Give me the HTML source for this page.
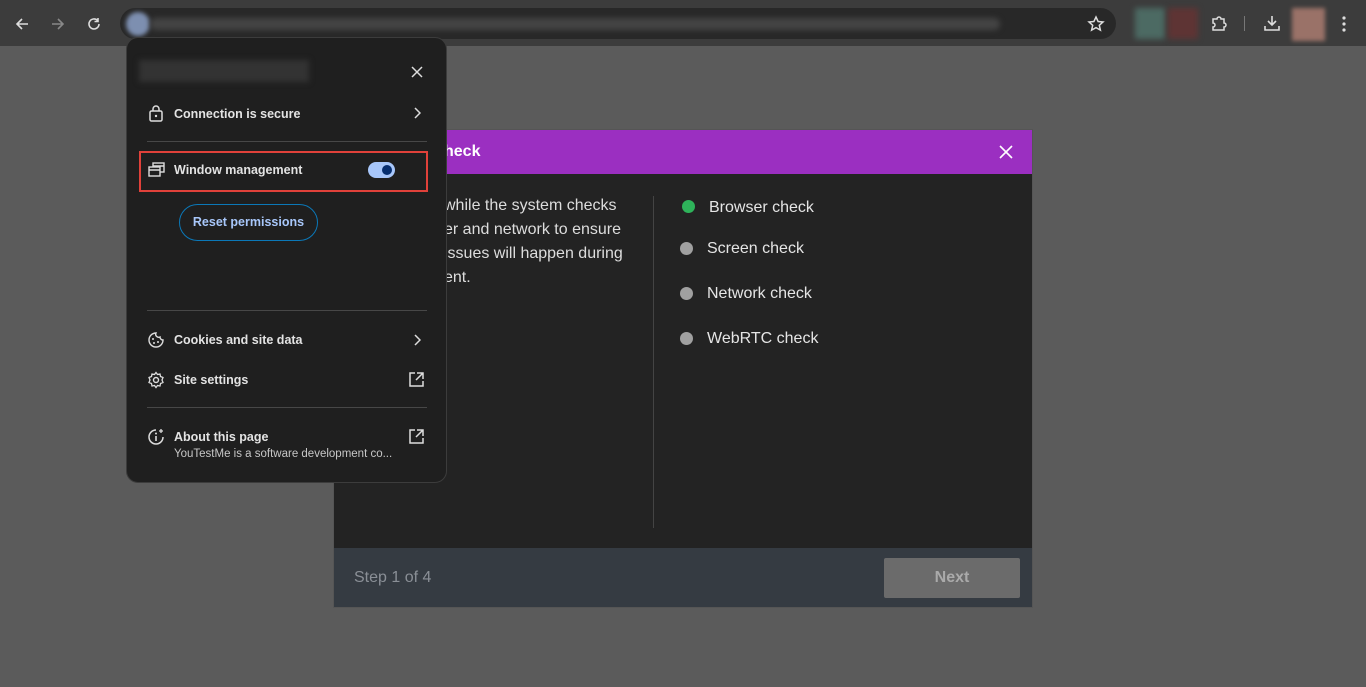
<!DOCTYPE html>
<html><head><meta charset="utf-8"><style>
*{margin:0;padding:0;box-sizing:border-box}
body{width:1366px;height:687px;overflow:hidden;font-family:"Liberation Sans",sans-serif;background:#5b5b5b;position:relative}
.bg{position:absolute;left:0;top:46px;width:1366px;height:641px;background-color:#5b5b5b}
.tb{position:absolute;left:0;top:0;width:1366px;height:46px;background:#3c3c3c}
.addr{position:absolute;left:120px;top:8px;width:996px;height:31px;border-radius:16px;background:#282828}
.blur{position:absolute;height:12px;top:17px;background:#444;filter:blur(3px);border-radius:6px}
.pop{position:absolute;left:126px;top:37px;width:321px;height:446px;background:#1f1f1f;border:1px solid #3c3c3c;border-radius:12px;color:#e3e3e3;font-size:12.5px;font-weight:bold}
.pop .row{position:absolute;left:47px}
.sep{position:absolute;left:20px;width:280px;height:1px;background:#474747}
.modal{position:absolute;left:333px;top:129px;width:700px;height:479px;background:#232323;border:1px solid #555}
.mh{height:44px;background:#9b2fc1;color:#fff;font-weight:bold;font-size:16px;padding:13px 0 0 110px}
.ft{position:absolute;left:0;bottom:0;width:698px;height:59px;background:#353b42}
.txt{position:absolute;color:#ddd;font-size:16px;line-height:24px}
.dot{position:absolute;width:13px;height:13px;border-radius:50%;background:#a0a0a0}
.chk{position:absolute;color:#e5e5e5;font-size:16px}
svg{position:absolute}
</style></head><body>
<div class="bg"></div>
<div class="tb">
<svg width="16" height="16" style="left:14px;top:16px" viewBox="0 0 16 16"><path d="M14 8H3M8 3L3 8l5 5" stroke="#ddd" stroke-width="1.6" fill="none"/></svg>
<svg width="16" height="16" style="left:50px;top:16px" viewBox="0 0 16 16"><path d="M2 8h11M8 3l5 5-5 5" stroke="#888" stroke-width="1.6" fill="none"/></svg>
<svg width="16" height="16" style="left:86px;top:16px" viewBox="0 0 16 16"><path d="M13 8a5 5 0 1 1-1.5-3.6M12 2v3.5H8.5" stroke="#ddd" stroke-width="1.6" fill="none"/></svg>
<div class="addr">
<div style="position:absolute;left:6px;top:4px;width:24px;height:24px;border-radius:50%;background:#7d8fb0;filter:blur(2px)"></div>
<div class="blur" style="left:30px;width:850px;top:10px"></div>
<svg width="18" height="18" style="left:967px;top:7px" viewBox="0 0 18 18"><path d="M9 2l2.1 4.5 4.9.5-3.7 3.3 1.1 4.8L9 12.6 4.6 15.1l1.1-4.8L2 7l4.9-.5z" stroke="#ddd" stroke-width="1.5" fill="none"/></svg>
</div>
<div style="position:absolute;left:1135px;top:8px;width:30px;height:31px;background:#4c6a63;filter:blur(3px)"></div>
<div style="position:absolute;left:1168px;top:8px;width:30px;height:31px;background:#5e3434;filter:blur(3px)"></div>
<svg width="18" height="18" style="left:1210px;top:15px" viewBox="0 0 18 18"><path d="M3 4h4a2 2 0 0 1 4 0h3v4a2 2 0 0 1 0 4v3H3v-3a2 2 0 0 0 0-4z" stroke="#ddd" stroke-width="1.5" fill="none"/></svg>
<div style="position:absolute;left:1244px;top:16px;width:1px;height:15px;background:#777"></div>
<svg width="18" height="18" style="left:1263px;top:14px" viewBox="0 0 18 18"><path d="M9 2v9M5 7l4 4 4-4M2 12v4h14v-4" stroke="#ddd" stroke-width="1.6" fill="none"/></svg>
<div style="position:absolute;left:1292px;top:8px;width:33px;height:33px;background:#9a7268;filter:blur(2px)"></div>
<svg width="6" height="18" style="left:1341px;top:15px" viewBox="0 0 6 18"><circle cx="3" cy="3" r="1.6" fill="#ddd"/><circle cx="3" cy="9" r="1.6" fill="#ddd"/><circle cx="3" cy="15" r="1.6" fill="#ddd"/></svg>
</div>

<div class="modal">
<div class="mh">heck</div>
<svg width="16" height="16" style="left:664px;top:14px" viewBox="0 0 16 16"><path d="M2 2l12 12M14 2L2 14" stroke="#fff" stroke-width="1.6"/></svg>
<div class="txt" style="left:110px;top:64px">while the system checks<br>er and network to ensure<br>issues will happen during<br>ent.</div>
<div style="position:absolute;left:319px;top:66px;width:1px;height:332px;background:#444"></div>
<div class="dot" style="left:348px;top:70px;background:#2eb35a"></div><div class="chk" style="left:375px;top:69px">Browser check</div>
<div class="dot" style="left:346px;top:112px"></div><div class="chk" style="left:373px;top:110px">Screen check</div>
<div class="dot" style="left:346px;top:157px"></div><div class="chk" style="left:373px;top:155px">Network check</div>
<div class="dot" style="left:346px;top:202px"></div><div class="chk" style="left:373px;top:200px">WebRTC check</div>
<div class="ft">
<div style="position:absolute;left:20px;top:21px;color:#8a8f96;font-size:16px">Step 1 of 4</div>
<div style="position:absolute;left:550px;top:10px;width:136px;height:40px;background:#6b6b6b;color:#aaa;font-weight:bold;font-size:16px;text-align:center;line-height:40px;border-radius:2px">Next</div>
</div>
</div>

<div class="pop">
<div style="position:absolute;left:12px;top:22px;width:170px;height:22px;background:#333;filter:blur(3px)"></div>
<svg width="12" height="12" style="left:284px;top:28px" viewBox="0 0 12 12"><path d="M1 1l10 10M11 1L1 11" stroke="#ddd" stroke-width="1.5"/></svg>
<svg width="16" height="18" style="left:21px;top:66px" viewBox="0 0 16 18"><rect x="2" y="7" width="12" height="10" rx="1.5" stroke="#ddd" stroke-width="1.5" fill="none"/><path d="M5 7V5a3 3 0 0 1 6 0v2" stroke="#ddd" stroke-width="1.5" fill="none"/><circle cx="8" cy="12" r="1.2" fill="#ddd"/></svg>
<div class="row" style="top:69px">Connection is secure</div>
<svg width="8" height="12" style="left:286px;top:69px" viewBox="0 0 8 12"><path d="M2 1l5 5-5 5" stroke="#ddd" stroke-width="1.5" fill="none"/></svg>
<div class="sep" style="top:103px"></div>
<div style="position:absolute;left:12px;top:113px;width:289px;height:41px;border:2px solid #e0413a"></div>
<svg width="18" height="16" style="left:21px;top:124px" viewBox="0 0 18 16"><rect x="5" y="1" width="11" height="9" stroke="#ddd" stroke-width="1.4" fill="none"/><rect x="1" y="5" width="11" height="9" fill="#1f1f1f" stroke="#ddd" stroke-width="1.4"/><path d="M1 8h11M5 4h11" stroke="#ddd" stroke-width="1.4"/></svg>
<div class="row" style="top:125px">Window management</div>
<div style="position:absolute;left:241px;top:124px;width:27px;height:16px;border-radius:8px;background:#a8c7fa"><div style="position:absolute;right:3px;top:3px;width:10px;height:10px;border-radius:50%;background:#062e6f"></div></div>
<div style="position:absolute;left:52px;top:166px;width:139px;height:37px;border:1px solid #0b78b8;border-radius:19px;color:#a8c7fa;text-align:center;line-height:35px">Reset permissions</div>
<div class="sep" style="top:272px"></div>
<svg width="18" height="18" style="left:20px;top:293px" viewBox="0 0 18 18"><path d="M9 2a7 7 0 1 0 7 7 3 3 0 0 1-3-3 3 3 0 0 1-4-4z" stroke="#ddd" stroke-width="1.4" fill="none"/><circle cx="6" cy="8" r="1" fill="#ddd"/><circle cx="7" cy="12" r="1" fill="#ddd"/><circle cx="11" cy="11" r="1" fill="#ddd"/></svg>
<div class="row" style="top:295px">Cookies and site data</div>
<svg width="8" height="12" style="left:286px;top:296px" viewBox="0 0 8 12"><path d="M2 1l5 5-5 5" stroke="#ddd" stroke-width="1.5" fill="none"/></svg>
<svg width="18" height="18" style="left:20px;top:333px" viewBox="0 0 18 18"><circle cx="9" cy="9" r="2.5" stroke="#ddd" stroke-width="1.4" fill="none"/><path d="M9 1.5l1.5 2 2.5-.5.5 2.5 2.5 1-1 2.5 1 2.5-2.5 1-.5 2.5-2.5-.5L9 16.5l-1.5-2-2.5.5-.5-2.5-2.5-1 1-2.5-1-2.5 2.5-1 .5-2.5 2.5.5z" stroke="#ddd" stroke-width="1.3" fill="none"/></svg>
<div class="row" style="top:335px">Site settings</div>
<svg width="15" height="15" style="left:282px;top:334px" viewBox="0 0 15 15"><path d="M6 1H1v13h13V9M8 1h6v6M14 1L7 8" stroke="#ddd" stroke-width="1.5" fill="none"/></svg>
<div class="sep" style="top:369px"></div>
<svg width="18" height="18" style="left:20px;top:390px" viewBox="0 0 18 18"><path d="M16 9a7 7 0 1 1-7-7" stroke="#ddd" stroke-width="1.5" fill="none"/><path d="M9 8v5" stroke="#ddd" stroke-width="1.6"/><circle cx="9" cy="5.5" r="1" fill="#ddd"/><path d="M14 1v4M12 3h4" stroke="#ddd" stroke-width="1.3"/></svg>
<div class="row" style="top:392px">About this page</div>
<div class="row" style="top:410px;font-weight:normal;font-size:11.5px;color:#c7c7c7">YouTestMe is a software development co...</div>
<svg width="15" height="15" style="left:282px;top:391px" viewBox="0 0 15 15"><path d="M6 1H1v13h13V9M8 1h6v6M14 1L7 8" stroke="#ddd" stroke-width="1.5" fill="none"/></svg>
</div>
</body></html>
